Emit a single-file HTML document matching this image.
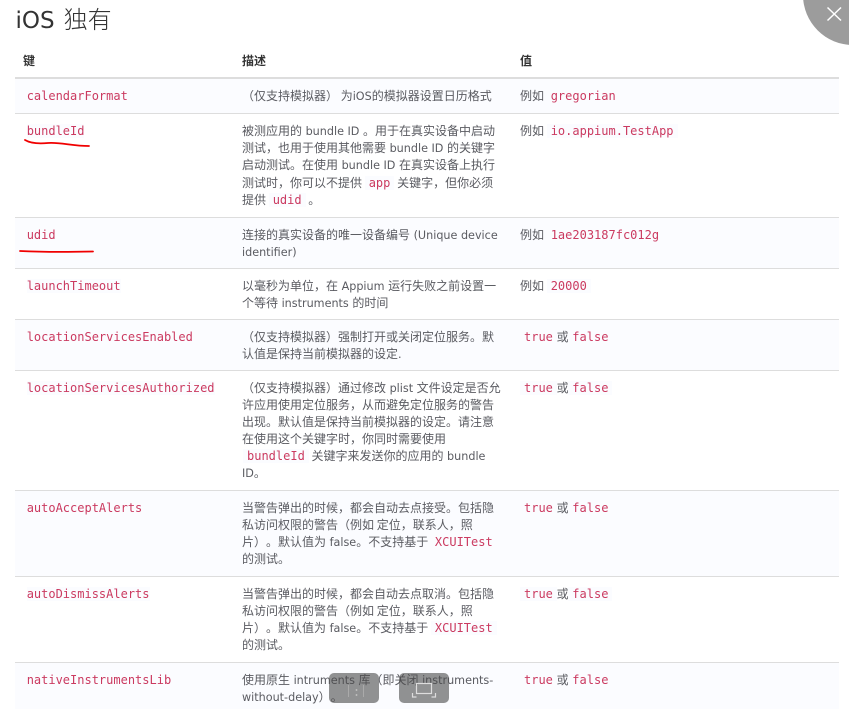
<!DOCTYPE html>
<html><head><meta charset="utf-8">
<style>
html,body{margin:0;padding:0;background:#fff;width:849px;height:709px;overflow:hidden}
body{position:relative;font-family:"DejaVu Sans","Noto Sans CJK SC",sans-serif;font-size:11px;color:#5a5b61}
.l{position:absolute;white-space:pre;line-height:17px;height:17px}
code{font-family:"DejaVu Sans Mono",monospace;font-size:12px;color:#cb3a60;background:#fbfcff;padding:0 4px}
code.k{padding:0}
code.t{margin-right:-3px}
code.f{margin-left:-3px}
.h{font-weight:bold;color:#333;font-size:12px;font-family:"Noto Sans CJK SC",sans-serif}
.r{position:absolute;left:15px;width:824px;border-bottom:1px solid #ddd;box-sizing:border-box}
.s{background:#fbfcff}
.c{font-family:"Noto Sans CJK SC",sans-serif;font-size:12px;text-spacing-trim:space-all;font-feature-settings:"palt" 0,"chws" 0}
i{font-style:normal;font-family:"DejaVu Sans",sans-serif;font-size:11.200px}
</style></head><body>
<div class="l" style="left:15.500px;top:1px;height:33px;line-height:33px;font-size:24px;font-weight:300;color:#333;font-family:'Noto Sans CJK SC',sans-serif;text-spacing-trim:space-all"><span style="font-family:'DejaVu Sans',sans-serif;font-size:23px;font-weight:400">iOS</span><span style="margin-left:9px">独有</span></div>

<div class="r" style="top:77px;height:0;border-bottom:2px solid #ddd"></div>
<div class="r s" style="top:79px;height:35px"></div>
<div class="r" style="top:114px;height:104px"></div>
<div class="r s" style="top:218px;height:51px"></div>
<div class="r" style="top:269px;height:51px"></div>
<div class="r s" style="top:320px;height:51px"></div>
<div class="r" style="top:371px;height:120px"></div>
<div class="r s" style="top:491px;height:86px"></div>
<div class="r" style="top:577px;height:86px"></div>
<div class="r s" style="top:663px;height:46px;border:0"></div>

<div class="l h" style="left:23px;top:52px">键</div>
<div class="l h" style="left:242px;top:52px">描述</div>
<div class="l h" style="left:520px;top:52px">值</div>

<div class="l" style="left:26.700px;top:88px"><code class="k">calendarFormat</code></div>
<div class="l" style="left:26.700px;top:123px"><code class="k">bundleId</code></div>
<div class="l" style="left:26.700px;top:227px"><code class="k">udid</code></div>
<div class="l" style="left:26.700px;top:278px"><code class="k">launchTimeout</code></div>
<div class="l" style="left:26.700px;top:329px"><code class="k">locationServicesEnabled</code></div>
<div class="l" style="left:26.700px;top:380px"><code class="k">locationServicesAuthorized</code></div>
<div class="l" style="left:26.700px;top:500px"><code class="k">autoAcceptAlerts</code></div>
<div class="l" style="left:26.700px;top:586px"><code class="k">autoDismissAlerts</code></div>
<div class="l" style="left:26.700px;top:672px"><code class="k">nativeInstrumentsLib</code></div>

<div class="l c" style="left:242px;top:87px">（仅支持模拟器） 为<i>iOS</i>的模拟器设置日历格式</div>

<div class="l c" style="left:242px;top:122px">被测应用的<i> bundle ID </i>。用于在真实设备中启动</div>
<div class="l c" style="left:242px;top:139px">测试，也用于使用其他需要<i> bundle ID </i>的关键字</div>
<div class="l c" style="left:242px;top:156px">启动测试。在使用<i> bundle ID </i>在真实设备上执行</div>
<div class="l c" style="left:242px;top:174px">测试时，你可以不提供 <code>app</code> 关键字，但你必须</div>
<div class="l c" style="left:242px;top:191px">提供 <code>udid</code> 。</div>

<div class="l c" style="left:242px;top:226px">连接的真实设备的唯一设备编号<i> (Unique device</i></div>
<div class="l c" style="left:242px;top:243px"><i>identifier)</i></div>

<div class="l c" style="left:242px;top:277px">以毫秒为单位，在<i> Appium </i>运行失败之前设置一</div>
<div class="l c" style="left:242px;top:294px">个等待<i> instruments </i>的时间</div>

<div class="l c" style="left:242px;top:328px">（仅支持模拟器）强制打开或关闭定位服务。默</div>
<div class="l c" style="left:242px;top:345px">认值是保持当前模拟器的设定<i>.</i></div>

<div class="l c" style="left:242px;top:379px">（仅支持模拟器）通过修改<i> plist </i>文件设定是否允</div>
<div class="l c" style="left:242px;top:396px">许应用使用定位服务，从而避免定位服务的警告</div>
<div class="l c" style="left:242px;top:413px">出现。默认值是保持当前模拟器的设定。请注意</div>
<div class="l c" style="left:242px;top:430px">在使用这个关键字时，你同时需要使用</div>
<div class="l c" style="left:243px;top:447px"><code>bundleId</code> 关键字来发送你的应用的<i> bundle</i></div>
<div class="l c" style="left:242px;top:464px"><i>ID</i>。</div>

<div class="l c" style="left:242px;top:499px">当警告弹出的时候，都会自动去点接受。包括隐</div>
<div class="l c" style="left:242px;top:516px">私访问权限的警告（例如 定位，联系人，照</div>
<div class="l c" style="left:242px;top:533px">片）。默认值为<i> false</i>。不支持基于 <code>XCUITest</code></div>
<div class="l c" style="left:242px;top:550px">的测试。</div>

<div class="l c" style="left:242px;top:585px">当警告弹出的时候，都会自动去点取消。包括隐</div>
<div class="l c" style="left:242px;top:602px">私访问权限的警告（例如 定位，联系人，照</div>
<div class="l c" style="left:242px;top:619px">片）。默认值为<i> false</i>。不支持基于 <code>XCUITest</code></div>
<div class="l c" style="left:242px;top:636px">的测试。</div>

<div class="l c" style="left:242px;top:671px">使用原生<i> intruments </i>库（即关闭<i> instruments-</i></div>
<div class="l c" style="left:242px;top:688px"><i>without-delay</i>）。</div>

<div class="l c" style="left:520px;top:87px">例如 <code>gregorian</code></div>
<div class="l c" style="left:520px;top:122px">例如 <code>io.appium.TestApp</code></div>
<div class="l c" style="left:520px;top:226px">例如 <code>1ae203187fc012g</code></div>
<div class="l c" style="left:520px;top:277px">例如 <code>20000</code></div>
<div class="l c" style="left:520px;top:328px"><code class="t">true</code> 或 <code class="f">false</code></div>
<div class="l c" style="left:520px;top:379px"><code class="t">true</code> 或 <code class="f">false</code></div>
<div class="l c" style="left:520px;top:499px"><code class="t">true</code> 或 <code class="f">false</code></div>
<div class="l c" style="left:520px;top:585px"><code class="t">true</code> 或 <code class="f">false</code></div>
<div class="l c" style="left:520px;top:671px"><code class="t">true</code> 或 <code class="f">false</code></div>

<svg style="position:absolute;left:0;top:0" width="849" height="709" viewBox="0 0 849 709">
<path d="M25 140 C30 143 38 144 48 143 C60 142 72 146 89 146" fill="none" stroke="#f00000" stroke-width="1.800" stroke-linecap="round"/>
<path d="M20 251 C40 252 70 252 93 251.500" fill="none" stroke="#f00000" stroke-width="1.800" stroke-linecap="round"/>
<circle cx="853" cy="-5" r="50" fill="#9c9c9c"/>
<path d="M827.500 7.500 L841 20.500 M841 7.500 L827.500 20.500" stroke="#fff" stroke-width="1.500" fill="none"/>
<rect x="329" y="673" width="50" height="30" rx="5" fill="#494949" fill-opacity=".6"/>
<rect x="399" y="673" width="50" height="30" rx="5" fill="#494949" fill-opacity=".6"/>
<path d="M348.500 685 V697 M363.500 685 V697" stroke="#aaa" stroke-width="1" fill="none"/>
<path d="M356.500 689 v2 M356.500 694 v2" stroke="#bbb" stroke-width="1.500" fill="none"/>
<rect x="416.500" y="683.500" width="15" height="10" fill="none" stroke="#ddd" stroke-width="1.200"/>
<path d="M412.500 693 v4 h4 M435.500 693 v4 h-4" fill="none" stroke="#ddd" stroke-width="1.200"/>
</svg>
</body></html>
